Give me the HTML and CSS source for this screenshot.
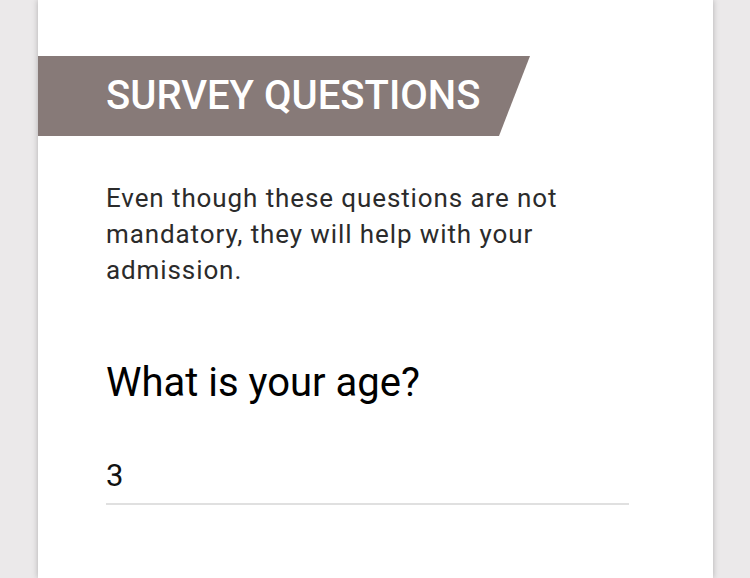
FILE: index.html
```html
<!DOCTYPE html>
<html>
<head>
<meta charset="utf-8">
<link rel="stylesheet" href="styles.css">
</head>
<body>
<div class="card">
  <div class="banner"><h1 class="banner-title">SURVEY QUESTIONS</h1></div>
  <div class="content">
    <p class="intro">Even though these questions are not mandatory, they will help with your admission.</p>
    <h2 class="question">What is your age?</h2>
    <div class="field">3</div>
  </div>
</div>
</body>
</html>
```
FILE: styles.css
```css
html, body {
  margin: 0;
  height: 100%;
}
body {
  background: #ebe9ea;
  font-family: Roboto, "Liberation Sans", sans-serif;
  overflow: hidden;
}
.card {
  margin-left: 38px;
  width: 675px;
  min-height: 100%;
  background: #ffffff;
  box-shadow: 0 0 6px rgba(0, 0, 0, 0.25);
  padding-top: 56px;
  box-sizing: border-box;
}
.banner {
  width: 492px;
  height: 80px;
  background: #877a78;
  clip-path: polygon(0 0, 100% 0, calc(100% - 31px) 100%, 0 100%);
  display: flex;
  align-items: center;
  padding-left: 68px;
  box-sizing: border-box;
}
.banner-title {
  margin: 0;
  color: #ffffff;
  font-weight: 500;
  font-size: 40px;
  line-height: 1;
}
.content {
  padding: 0 84px 0 68px;
}
.intro {
  margin: 44px 0 0;
  font-size: 26px;
  line-height: 36px;
  letter-spacing: 0.9px;
  color: #2b2b2b;
}
.question {
  margin: 71px 0 0;
  font-size: 40px;
  font-weight: 400;
  color: #000000;
  line-height: normal;
}
.field {
  margin-top: 51px;
  font-size: 31px;
  line-height: normal;
  color: #111111;
  padding-bottom: 9px;
  border-bottom: 2px solid #e0e0e0;
}
```
